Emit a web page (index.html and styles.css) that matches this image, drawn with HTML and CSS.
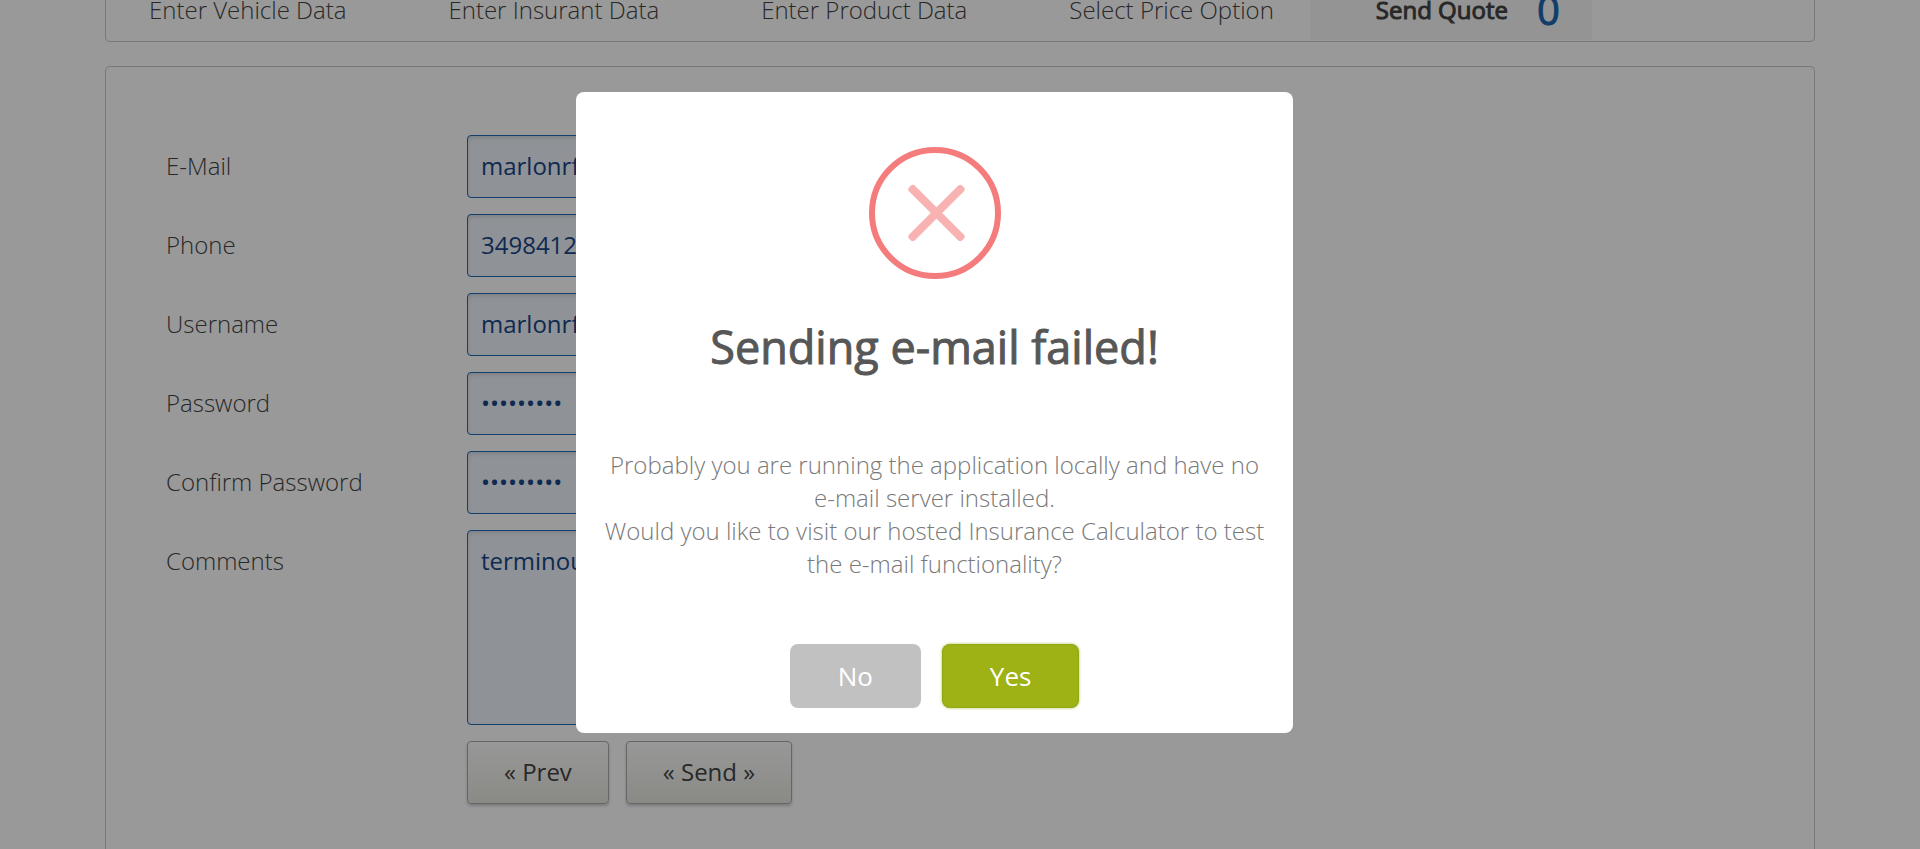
FILE: index.html
```
<!DOCTYPE html>
<html lang="en">
<head>
<meta charset="utf-8">
<title>Send Quote</title>
<link rel="stylesheet" href="styles.css">
</head>
<body>
<div class="page">
  <nav class="steps">
    <a class="step" href="#vehicle">Enter Vehicle Data</a>
    <a class="step" href="#insurant">Enter Insurant Data</a>
    <a class="step" href="#product">Enter Product Data</a>
    <a class="step" href="#price">Select Price Option</a>
    <a class="step step-active" href="#send">Send Quote <span class="counter">0</span></a>
  </nav>
  <form class="card">
    <div class="row">
      <label class="label" for="email">E-Mail</label>
      <input class="field" id="email" type="text" value="marlonrf">
    </div>
    <div class="row">
      <label class="label" for="phone">Phone</label>
      <input class="field" id="phone" type="text" value="3498412">
    </div>
    <div class="row">
      <label class="label" for="username">Username</label>
      <input class="field" id="username" type="text" value="marlonrf">
    </div>
    <div class="row">
      <label class="label" for="password">Password</label>
      <input class="field" id="password" type="password" value="123456789">
    </div>
    <div class="row">
      <label class="label" for="confirm">Confirm Password</label>
      <input class="field" id="confirm" type="password" value="123456789">
    </div>
    <div class="row">
      <label class="label" for="comments">Comments</label>
      <textarea class="field field-area" id="comments">terminou</textarea>
    </div>
    <div class="actions">
      <button class="btn" type="button">« Prev</button>
      <button class="btn" type="button">« Send »</button>
    </div>
  </form>
</div>
<div class="overlay"></div>
<div class="modal" role="dialog" aria-labelledby="modal-title">
  <svg class="modal-icon" viewBox="0 0 132 132" aria-hidden="true">
    <circle cx="66" cy="66" r="63" fill="none" stroke="#f47c7c" stroke-width="6"/>
    <g fill="#f8b2b2" transform="translate(67.5 66)">
      <rect x="-37.5" y="-4" width="75" height="8" rx="3" transform="rotate(45)"/>
      <rect x="-37.5" y="-4" width="75" height="8" rx="3" transform="rotate(-45)"/>
    </g>
  </svg>
  <h2 class="modal-title" id="modal-title">Sending e-mail failed!</h2>
  <p class="modal-text">Probably you are running the application locally and have no e-mail server installed.<br>Would you like to visit our hosted Insurance Calculator to test the e-mail functionality?</p>
  <div class="modal-actions">
    <button class="modal-btn" type="button">No</button>
    <button class="modal-btn modal-btn-confirm" type="button">Yes</button>
  </div>
</div>
</body>
</html>
```
FILE: styles.css
```
* {
  box-sizing: border-box;
}

body {
  margin: 0;
  overflow: hidden;
  background: #fff;
  color: #444;
  font: 300 24px/33px "Open Sans", sans-serif;
}

.page {
  padding: 0 105px;
}

.steps {
  display: flex;
  margin-bottom: 24px;
  padding: 0 0 1px;
  border: 1px solid #c8c8c8;
  border-top: 0;
  border-radius: 0 0 5px 5px;
}

.step {
  display: flex;
  align-items: center;
  gap: 29px;
  padding: 0 36px 20px 66px;
  color: #444;
  line-height: 20px;
  text-decoration: none;
  white-space: nowrap;
}

.step:first-child {
  padding-left: 43px;
}

.step-active {
  padding-right: 32px;
  background: #f7f7f7;
  font-weight: 400;
  -webkit-text-stroke: 1px #444;
}

.counter {
  color: #1c66b0;
  font-size: 40px;
  -webkit-text-stroke: 1px #1c66b0;
}

.card {
  min-height: calc(100vh - 66px);
  padding: 68px 60px 42px;
  border: 1px solid #c8c8c8;
  border-bottom: 0;
  border-radius: 5px 5px 0 0;
}

.row {
  display: flex;
  align-items: flex-start;
  margin-bottom: 16px;
}

.label {
  flex: 0 0 301px;
  padding: 14px 0;
}

.field {
  width: 480px;
  height: 63px;
  padding: 13px 13px 15px;
  border: 1px solid #2169b9;
  border-radius: 4px;
  background: #eff4fa;
  box-shadow: inset 0 2px 4px rgba(0, 0, 0, 0.12);
  color: #194688;
  font: 400 24px/33px "Open Sans", sans-serif;
}

.field-area {
  height: 195px;
  resize: none;
}

.actions {
  display: flex;
  gap: 17px;
  padding-left: 301px;
}

.btn {
  height: 63px;
  padding: 0 36px 2px;
  border: 1px solid #aaa;
  border-radius: 4px;
  background: linear-gradient(#fdfdfd, #e6e6e0);
  box-shadow: 0 2px 3px rgba(0, 0, 0, 0.2);
  color: #444;
  font: 400 24px/33px "Open Sans", sans-serif;
}

.overlay {
  position: fixed;
  inset: 0;
  background: rgba(0, 0, 0, 0.4);
}

.modal {
  position: fixed;
  top: 92px;
  left: 50%;
  width: 717px;
  margin-left: -384px;
  padding: 55px 26px 25px;
  border-radius: 8px;
  background: #fff;
  text-align: center;
}

.modal-icon {
  display: block;
  width: 132px;
  height: 132px;
  margin: 0 auto;
}

.modal-title {
  margin: 38px 0 71px;
  color: #575757;
  font-size: 45px;
  font-weight: 400;
  line-height: 60px;
  -webkit-text-stroke: 1px #575757;
}

.modal-text {
  margin: 0 0 64px;
  color: #797979;
}

.modal-actions {
  display: flex;
  justify-content: center;
  gap: 21px;
}

.modal-btn {
  height: 64px;
  padding: 0 48px;
  border: 0;
  border-radius: 8px;
  background: #c1c1c1;
  color: #fff;
  font: 400 26px/36px "Open Sans", sans-serif;
}

.modal-btn-confirm {
  background: #9eb115;
  box-shadow: 0 0 3px rgba(158, 177, 21, 0.8), inset 0 0 2px rgba(0, 0, 0, 0.2);
}
```
